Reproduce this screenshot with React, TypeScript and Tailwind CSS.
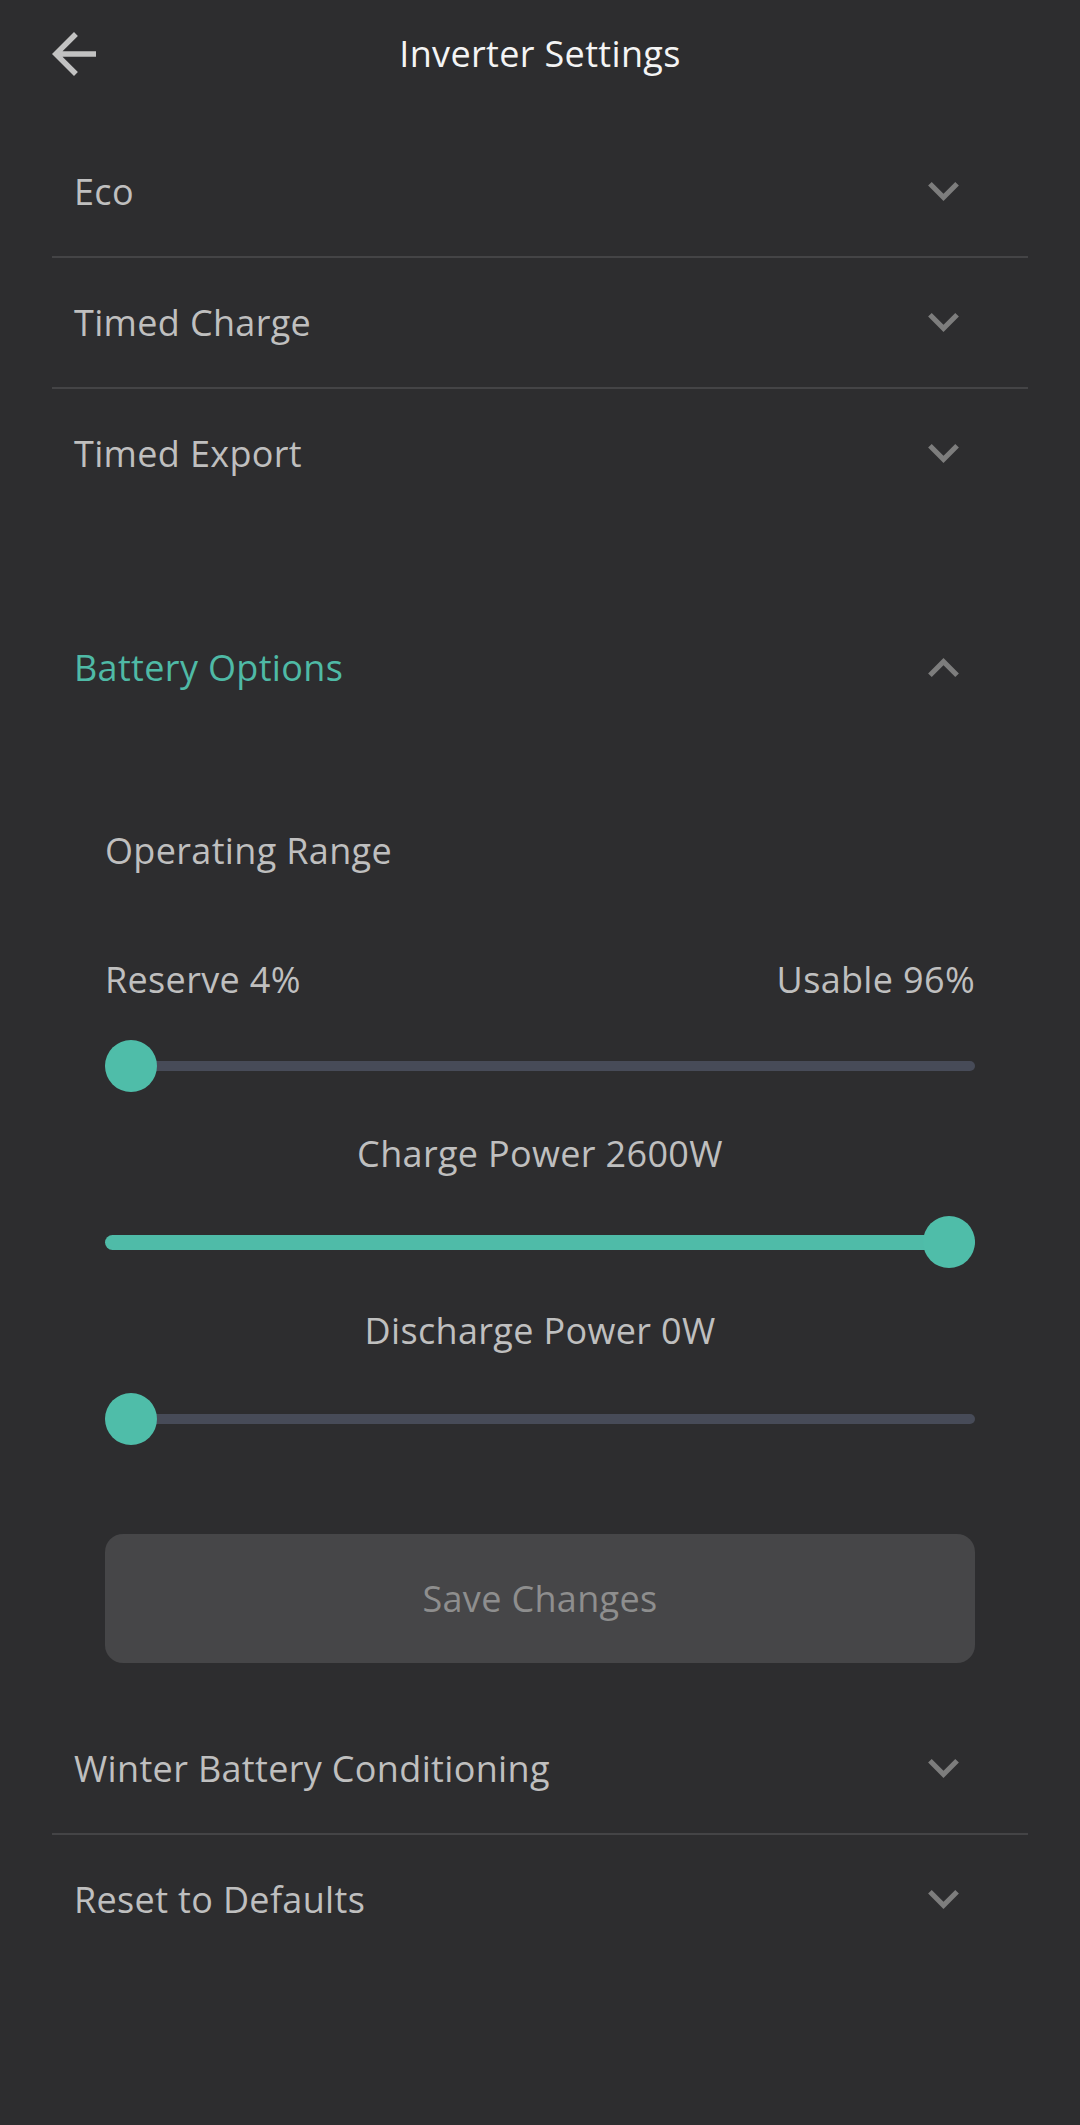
import React from "react";

const Chevron = ({ up = false }: { up?: boolean }) => (
  <svg
    width="31"
    height="19"
    viewBox="6 8.59 12 7.41"
    className={up ? "rotate-180" : ""}
    fill="#7d7d7d"
  >
    <path d="M16.59 8.59 12 13.17 7.41 8.59 6 10l6 6 6-6z" />
  </svg>
);

const Row = ({ title, border = true }: { title: string; border?: boolean }) => (
  <div
    className={`h-[129px] flex items-center justify-between pl-[22px] pr-[69px] ${
      border ? "border-b-2 border-[#444446] box-content" : ""
    }`}
  >
    <span className="text-[36px] leading-[50px] text-[#bfbfbf]">{title}</span>
    <Chevron />
  </div>
);

const Slider = ({ pos, active }: { pos: "start" | "end"; active?: boolean }) => (
  <div className="relative h-[52px] flex items-center">
    {active ? (
      <div className="w-full h-[15px] rounded-full bg-[#4fbba8]" />
    ) : (
      <div className="w-full h-[10px] rounded-full bg-[#474b58]" />
    )}
    <div
      className={`absolute top-0 w-[52px] h-[52px] rounded-full bg-[#4fbda9] ${
        pos === "start" ? "left-0" : "right-0"
      }`}
    />
  </div>
);

export default function App() {
  return (
    <div
      className="min-h-screen bg-[#2d2d2f] text-[#bfbfbf] tracking-[0.34px]"
      style={{ fontFamily: '"Open Sans", "Noto Sans", sans-serif' }}
    >
      <div className="h-[108px] grid grid-cols-[1fr_auto_1fr] items-center px-[52px]">
        <div>
          <svg width="44" height="44" viewBox="4 4 16 16" fill="#c2c2c2">
            <path d="M20 11H7.83l5.59-5.59L12 4l-8 8 8 8 1.41-1.41L7.83 13H20v-2z" />
          </svg>
        </div>
        <h1 className="text-[36px] leading-[50px] text-[#f4f4f4]">Inverter Settings</h1>
        <div />
      </div>

      <div className="mx-[52px] mt-[19px]">
        <Row title="Eco" />
        <Row title="Timed Charge" />
        <Row title="Timed Export" border={false} />

        <div className="mt-[85px] pb-[41px]">
          <div className="h-[129px] flex items-center justify-between pl-[22px] pr-[69px]">
            <span className="text-[36px] leading-[50px] text-[#4fbaa6]">Battery Options</span>
            <Chevron up />
          </div>

          <div className="px-[53px]">
            <div className="mt-[94px] text-[36px] leading-[50px]">Operating Range</div>
            <div className="mt-[79px] flex justify-between text-[36px] leading-[50px]">
              <span>Reserve 4%</span>
              <span>Usable 96%</span>
            </div>
            <div className="mt-[35px]">
              <Slider pos="start" />
            </div>
            <div className="mt-[37px] text-center text-[36px] leading-[50px]">Charge Power 2600W</div>
            <div className="mt-[37px]">
              <Slider pos="end" active />
            </div>
            <div className="mt-[38px] text-center text-[36px] leading-[50px]">Discharge Power 0W</div>
            <div className="mt-[37px]">
              <Slider pos="start" />
            </div>
            <button className="mt-[89px] w-full h-[129px] rounded-[18px] bg-[#464648] text-[36px] text-[#8e8e8e] tracking-[0.34px]">
              Save Changes
            </button>
          </div>
        </div>

        <Row title="Winter Battery Conditioning" />
        <Row title="Reset to Defaults" border={false} />
      </div>
    </div>
  );
}
